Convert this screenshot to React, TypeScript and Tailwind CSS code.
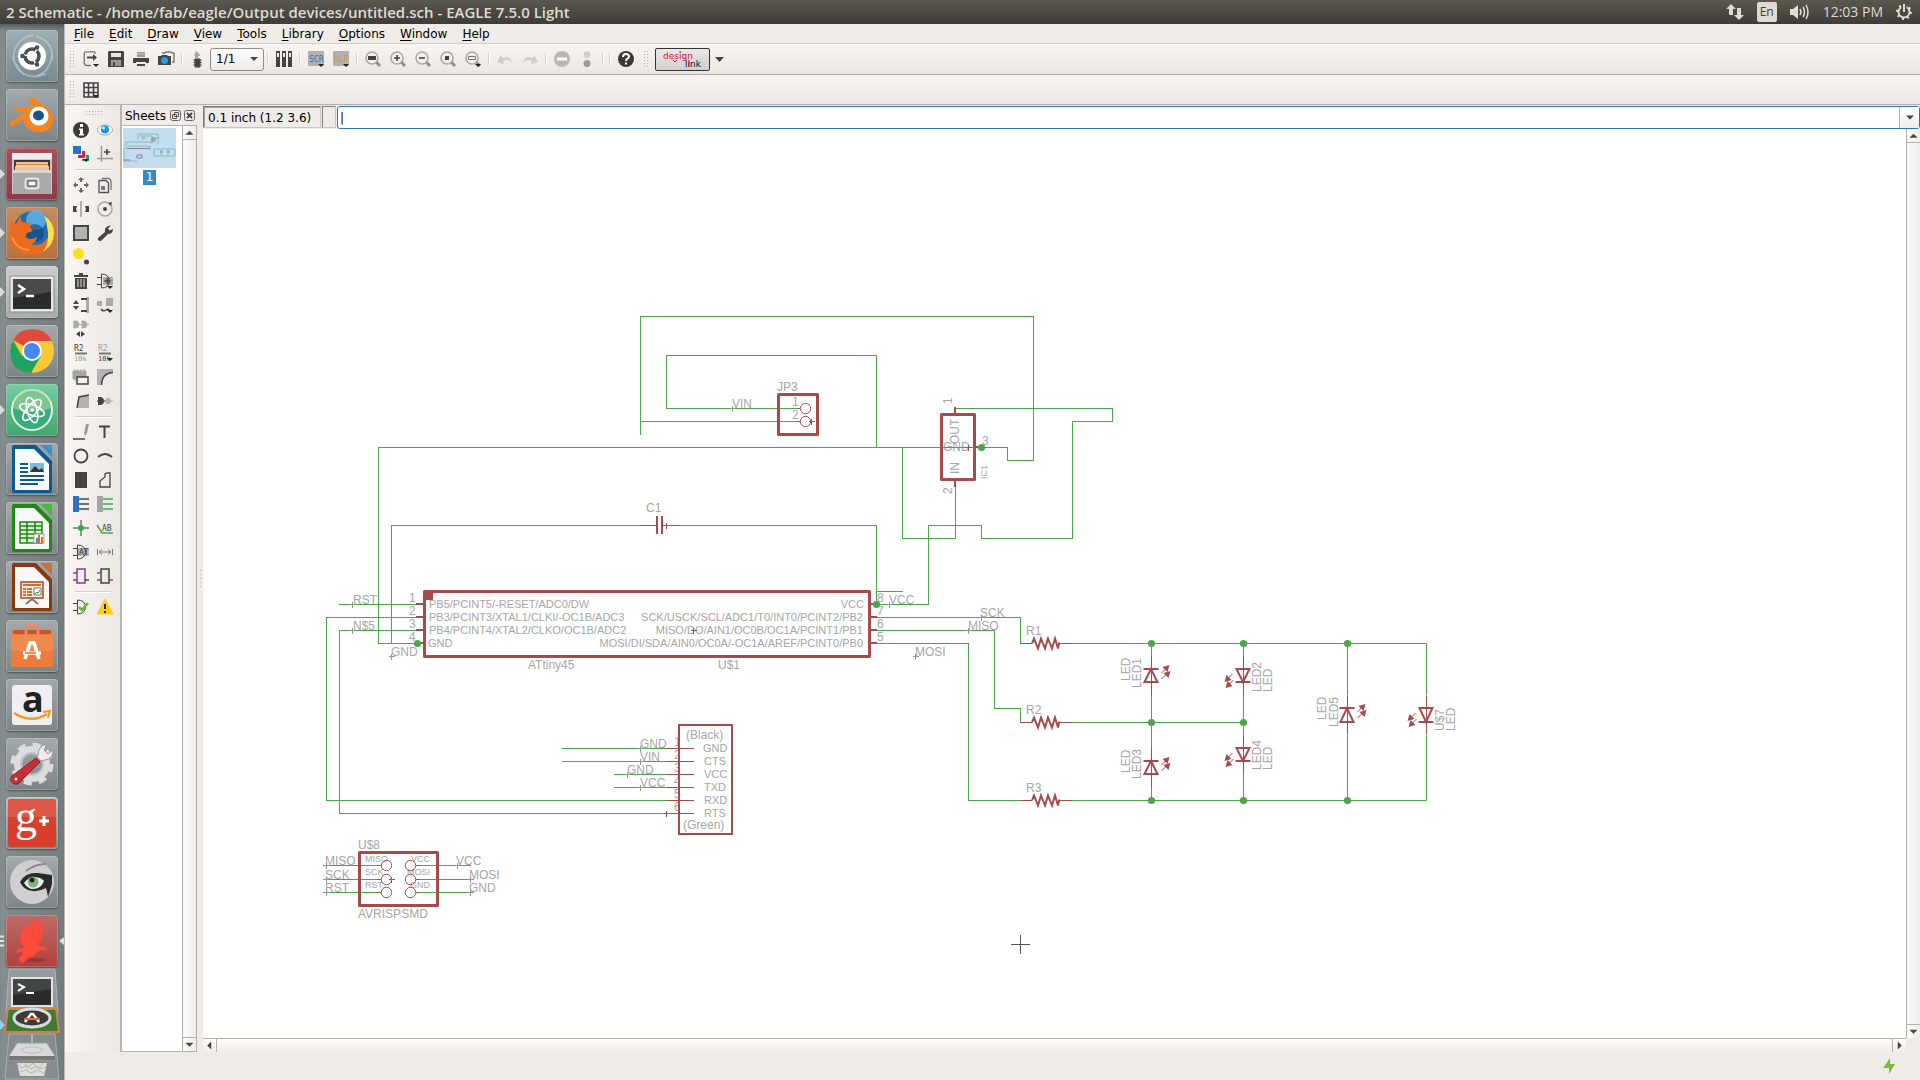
import { ReactNode } from "react";

const WIRE = "#4ba54b";
const PART = "#a54b4b";
const LABEL = "#a5a5a5";
const DARK = "#444444";
const SOFT = "#a0a0a0";

const menus = ["File", "Edit", "Draw", "View", "Tools", "Library", "Options", "Window", "Help"];

function Icon({ children, w = 16, h = 16 }: { children: ReactNode; w?: number; h?: number }) {
  return (
    <svg width={w} height={h} viewBox={`0 0 ${w} ${h}`} fill="none" className="shrink-0 overflow-visible">
      {children}
    </svg>
  );
}

/* ---------- toolbar ---------- */

function ToolButton({ label, children }: { label: string; children: ReactNode }) {
  return (
    <button aria-label={label} className="flex h-6 w-[25px] items-center justify-center">
      <Icon>{children}</Icon>
    </button>
  );
}

function Separator() {
  return (
    <div className="flex w-[7px] justify-center">
      <div className="h-3 w-px bg-[#d2cfcb] shadow-[1px_0_0_#ffffff]" />
    </div>
  );
}

function DropMark() {
  return <path d="M10 13h6l-3 3z" fill="#222" />;
}

function Lens({ children }: { children?: ReactNode }) {
  return (
    <>
      <circle cx="7" cy="7" r="6" stroke="#a8a8a8" strokeWidth="1.6" fill="#f3f1ee" />
      <path d="M11.5 11.5l3.5 3.5" stroke="#8f8f8f" strokeWidth="3" />
      {children}
    </>
  );
}

function Grip() {
  return (
    <svg width="5" height="17" className="shrink-0">
      {[0, 3, 6, 9, 12, 15].map((y) => (
        <path key={y} d={`M0 ${y + 0.5}h1M3 ${y + 0.5}h1`} stroke="#b5b1ac" />
      ))}
    </svg>
  );
}

function MainToolbar() {
  return (
    <div className="flex h-[31px] shrink-0 items-center border-b border-[#b4b0ac] bg-linear-to-b from-[#f8f5f2] to-[#ebe8e3] pl-[5px]">
      <div className="w-2"><Grip /></div>
      <ToolButton label="Open">
        <path d="M12 3V1.5Q12 .8 11 .8H3Q1.2 .8 1.2 2.5v9Q1.2 14.5 4 14.5h4" stroke="#777" strokeWidth="1.3" />
        <path d="M4 5.5h6V3l4 3.5-4 3.5V7.5H4z" fill={DARK} />
        <DropMark />
      </ToolButton>
      <ToolButton label="Save">
        <path d="M1 0h14l1 1v15H0V1z" fill={DARK} />
        <path d="M3 2h10v4H3z" fill="#e8e6e3" />
        <path d="M3 9h10v6H3z" fill="#999" />
        <path d="M5 11h2v4H5z" fill={DARK} />
      </ToolButton>
      <ToolButton label="Print">
        <path d="M4 1h8v5H4z" fill="#999" />
        <path d="M0 7h16v5h-3v-1H3v1H0z" fill={DARK} />
        <path d="M4 13h8v2H4z" fill={DARK} />
        <path d="M4 3h8" stroke="#ccc" />
      </ToolButton>
      <ToolButton label="CAM processor">
        <path d="M4 2h3l1-1h5l1 1h2v9h-2" stroke="#777" strokeWidth="1.4" />
        <path d="M0 5h3l1-1h5l1 1h3v9H0z" fill={DARK} />
        <circle cx="6.5" cy="9.5" r="3.5" fill="#2d9be0" />
      </ToolButton>
      <Separator />
      <ToolButton label="Board">
        <path d="M6 0q4 3 4 5H8v2H5V5H4z" fill="#a5a5a5" />
        <path d="M5 8h5v8H5zM3.5 9h8M3.5 11.5h8M3.5 14h8" fill={DARK} stroke={DARK} />
      </ToolButton>
      <div className="relative flex">
        <select aria-label="Sheet" className="h-[23px] w-[54px] appearance-none rounded-[3px] border border-[#8f8b87] bg-linear-to-b from-white to-[#eceae7] pl-[5px] text-xs leading-none">
          <option>1/1</option>
        </select>
        <svg width="8" height="5" className="pointer-events-none absolute right-[6px] top-[9px]">
          <path d="M0 0h8L4 4z" fill={DARK} />
        </svg>
      </div>
      <Separator />
      <ToolButton label="Library manager">
        {[0, 6, 12].map((x) => (
          <g key={x}>
            <path d={`M${x} 0h4v16H${x}z`} fill={DARK} />
            <path d={`M${x + 1} 2h2v4h-2z`} fill="#eee" />
          </g>
        ))}
      </ToolButton>
      <Separator />
      <ToolButton label="Run script">
        <path d="M0 0h16v15H0z" fill="#b2b2b2" />
        <text x="1" y="11" fontSize="8" fill="#2f77bd" className="font-['DejaVu_Sans_Mono',monospace]">SCR</text>
        <DropMark />
      </ToolButton>
      <ToolButton label="Run ULP">
        <path d="M0 0h16v15H0z" fill="#b2b2b2" />
        <text x="1" y="11" fontSize="8" fill="#e8912b" className="font-['DejaVu_Sans_Mono',monospace]">ULP</text>
        <DropMark />
      </ToolButton>
      <Separator />
      <ToolButton label="Zoom to fit"><Lens><path d="M3 5h8v4H3z" fill={DARK} /></Lens></ToolButton>
      <ToolButton label="Zoom in"><Lens><path d="M7 4v6M4 7h6" stroke={DARK} strokeWidth="1.6" /></Lens></ToolButton>
      <ToolButton label="Zoom out"><Lens><path d="M4 7h6" stroke={DARK} strokeWidth="1.6" /></Lens></ToolButton>
      <ToolButton label="Redraw"><Lens><path d="M5 5h4v4H5z" fill={DARK} /></Lens></ToolButton>
      <ToolButton label="Zoom select">
        <Lens><path d="M3.5 5.5h7v3h-7z" stroke="#777" /></Lens>
        <DropMark />
      </ToolButton>
      <Separator />
      <ToolButton label="Undo"><path d="M15 12Q14 4 5 7L4 4 0 11l7 2-1-3q6-3 9 2z" fill="#cfccc9" /></ToolButton>
      <ToolButton label="Redo"><path d="M1 12Q2 4 11 7l1-3 4 7-7 2 1-3q-6-3-9 2z" fill="#cfccc9" /></ToolButton>
      <Separator />
      <ToolButton label="Stop">
        <circle cx="8" cy="8" r="8" fill="#b9b6b3" />
        <path d="M3 6.5h10v3H3z" fill="#fff" />
      </ToolButton>
      <ToolButton label="Go">
        <circle cx="8" cy="3.5" r="3.3" fill="#cfccc9" />
        <circle cx="8" cy="12.5" r="3.5" fill="#9c9996" />
      </ToolButton>
      <Separator />
      <Separator />
      <ToolButton label="Help">
        <circle cx="8" cy="8" r="8" fill="#3a3a3a" />
        <path d="M5 6q0-3 3-3t3 2.5q0 1.5-1.5 2.2Q8 8.5 8 10" stroke="#fff" strokeWidth="2" />
        <path d="M7 11.5h2v2H7z" fill="#fff" />
      </ToolButton>
      <div className="flex w-[17px] justify-center"><Grip /></div>
      <button aria-label="Design link" className="flex h-[23px] w-[55px] items-center justify-center rounded-[2px] border border-[#333] bg-linear-to-b from-[#e8e8e8] to-[#cfcfcf]">
        <svg width="40" height="19" className="overflow-visible font-['DejaVu_Sans',sans-serif]">
          <text x="0" y="9" fontSize="9" fill="#d3123f">design</text>
          <path d="M16 2h2M10 10l2 2 2-2" stroke="#d3123f" fill="none" />
          <text x="22" y="17" fontSize="9" fill="#111">link</text>
          <path d="M26 11v6" stroke="#d3123f" />
        </svg>
      </button>
      <button aria-label="Design link options" className="flex w-[19px] justify-center">
        <Icon w={9} h={5}><path d="M0 0h9L4.5 5z" fill={DARK} /></Icon>
      </button>
    </div>
  );
}

/* ---------- tool palette ---------- */

const gate = "M0 4.5h4M0 11.5h4M4.5 1v14M4.5 1Q12 1 12.5 8 12 15 4.5 15";

const palette: ([string, ReactNode] | null)[][] = [
  [
    ["Info", <><circle cx="8" cy="8" r="8" fill="#3c3c3c" /><path d="M7 2h3v3H7zM6 6.5h4V12h1v1.5H6V12h1V8H6z" fill="#fff" /></>],
    ["Show", <><ellipse cx="8" cy="8" rx="7.5" ry="5" fill="#fff" stroke="#aaa" /><circle cx="8" cy="7.5" r="4" fill="#1296e0" /><circle cx="6.5" cy="6" r="1.5" fill="#d5efff" /></>],
    ["Display", <><path d="M0 0h8v8H0z" fill="#2c74bf" /><path d="M9 5h3v7H5V9h4z" fill="#d81b5a" /><path d="M13 9h3v6H9v-2h4z" fill="#25a55a" /><DropMark /></>],
    ["Mark", <><path d="M4.5 0v16M0 12.5h16" stroke="#999" strokeWidth="1.5" /><path d="M10 3v6M7 6h6" stroke={DARK} strokeWidth="1.5" /></>]
  ],
  [
    ["Move", <path d="M8 0l3 3H9v2H7V3H5zM8 16l-3-3h2v-2h2v2h2zM0 8l3-3v2h2v2H3v2zM16 8l-3 3V9h-2V7h2V5z" fill="#666" />],
    ["Copy", <><path d="M5 1.5h7l2 2V13" stroke="#777" strokeWidth="1.3" /><path d="M2 3.5h7l2.5 2.5v9.5H2z" stroke="#555" strokeWidth="1.3" /><path d="M4 9h4v4H4z" fill="#777" /></>],
    ["Mirror", <><path d="M8 0v16" stroke="#999" strokeWidth="1.5" /><path d="M0 5h4L3 8l1 3H0zM16 5h-4l1 3-1 3h4z" fill={DARK} /></>],
    ["Rotate", <><circle cx="8" cy="8" r="7" stroke="#aaa" strokeWidth="1.6" /><circle cx="8" cy="8" r="2" fill={DARK} /><path d="M11 2l4-1-1 4z" fill={DARK} /></>],
    ["Group", <path d="M1 1h14v14H1z" fill="#b2b2b2" stroke={DARK} strokeWidth="2" />],
    ["Change", <path d="M1 13l7-6q-1-4 3-6l3-.5-3 3 1.5 2L16 4q0 5-5 5l-7 7Q0 16 1 13z" fill={DARK} />],
    ["Paste", <><circle cx="5.5" cy="4.5" r="5.5" fill="#ffe01f" /><circle cx="13.5" cy="13" r="2.5" fill={DARK} /></>],
    null,
    ["Delete", <><path d="M6 0h4v2h5v2H1V2h5zM2 5h12v11H2z" fill={DARK} /><path d="M5 6v8M8 6v8M11 6v8" stroke="#ddd" /></>],
    ["Add", <><path d="M6 4h10v8H6z" fill="#a8a8a8" /><path d={gate} stroke={DARK} /><path d="M10.5 5v6M7.5 8h6" stroke={DARK} strokeWidth="1.5" /><DropMark /></>],
    ["Pinswap", <><path d="M3 3l3 4H0zM3 13l3-4H0z" fill={DARK} /><path d="M13 0h3v16h-3z" fill="#aaa" /><path d="M8 2h6M8 14h6" stroke={DARK} strokeWidth="2" /></>],
    ["Replace", <><path d="M0 4h5v5H0zM9 1h7v8H9z" fill="#aaa" /><path d="M4 12q2 3 5 1t3 1" stroke={DARK} strokeWidth="1.5" /><DropMark /></>],
    ["Gateswap", <><path d="M1 0h1q4 0 4 3.5T2 7H1zM9 0h1q4 0 4 3.5T10 7H9zM0 1.5h2M0 5.5h2M6 3.5h3M14 3.5h2" fill="#aaa" stroke="#aaa" /><path d="M3 13l4-3v6zM12 13l-4-3v6z" fill={DARK} /></>],
    null,
    ["Name", <><text x="1" y="6" fontSize="8" fill={DARK}>R2</text><path d="M2 8.5h12" stroke="#777" strokeWidth="2" /><text x="1" y="16" fontSize="7" fill={SOFT}>10k</text></>],
    ["Value", <><text x="1" y="6" fontSize="8" fill={SOFT}>R2</text><path d="M2 8.5h12" stroke="#777" strokeWidth="2" /><text x="1" y="16" fontSize="7" fill={DARK}>10k</text><DropMark /></>],
    ["Smash", <><path d="M0 2h13v8H0zM2 0v12M5 0v12M8 0v12M11 0v12" fill="#a5a5a5" stroke="#a5a5a5" /><path d="M4 8h11v7H4z" fill="#f4f2ef" stroke={DARK} strokeWidth="1.5" /></>],
    ["Miter", <><path d="M0 0h16v4Q5 4 5 16H0z" fill="#b2b2b2" /><path d="M16 3.5Q5 4 4.5 16" stroke={DARK} strokeWidth="1.5" /></>],
    ["Split", <><path d="M4 15L6 4l10-2v13z" fill="#b2b2b2" /><path d="M4 15L6 4l10-2" stroke={DARK} strokeWidth="1.5" /></>],
    ["Invoke", <><path d="M0 8h2M6 8h3" stroke={DARK} /><path d="M1 4h3q3 1 3 4t-3 4H1z" fill={DARK} /><path d="M9 5h2q3 0 3 3t-3 3H9zM14 7.5h2v1h-2z" fill="#b2b2b2" /></>]
  ],
  [
    ["Line", <><path d="M0 15h12" stroke={DARK} strokeWidth="1.5" /><path d="M13 0h3l-2 9-2 3-1-3z" fill="#999" /></>],
    ["Text", <path d="M2 2.5h11M7.5 2v12" stroke={DARK} strokeWidth="2" />],
    ["Circle", <circle cx="8" cy="8" r="6.5" stroke={DARK} strokeWidth="1.8" />],
    ["Arc", <path d="M1 9q7-6 14 0" stroke={DARK} strokeWidth="2" />],
    ["Rectangle", <path d="M2 0h12v16H2z" fill={DARK} />],
    ["Polygon", <path d="M3 15V9l5-4V2l2-1h3v14z" stroke={DARK} strokeWidth="1.3" />],
    ["Bus", <><path d="M0 0h6v16H0z" fill="#2c74bf" /><path d="M6 3h10M6 8h10M6 13h10" stroke={DARK} strokeWidth="1.5" /></>],
    ["Net", <><path d="M0 0h6v16H0z" fill="#a5a5a5" /><path d="M6 3h10M6 8h10M6 13h10" stroke={WIRE} strokeWidth="1.5" /></>],
    ["Junction", <><path d="M8 0v16M0 8h16" stroke="#777" strokeWidth="1.5" /><circle cx="8" cy="8" r="3" fill="#3aa83a" /></>],
    ["Label", <><path d="M0 5l5 8h11" stroke={WIRE} strokeWidth="1.5" /><text x="5" y="11" fontSize="8" fill={DARK}>AB</text></>],
    ["Attribute", <><path d="M5 4h11v8H5z" fill="#b2b2b2" /><path d={gate} stroke={DARK} /><text x="6" y="11" fontSize="8" fill={DARK}>AT</text></>],
    ["Dimension", <><path d="M.5 5v6M15.5 5v6M2 8h12" stroke="#777" /><path d="M5 5.5L2 8l3 2.5M11 5.5L14 8l-3 2.5" stroke="#777" /></>],
    ["Module", <><path d="M4 1h8v14H4z" stroke="#8e3a94" strokeWidth="1.5" /><path d="M0 5h4M0 12h4" stroke="#8e3a94" strokeWidth="1.5" /><path d="M12 12h4" stroke={DARK} strokeWidth="1.5" /></>],
    ["Port", <><path d="M4 1h8v14H4z" stroke={DARK} strokeWidth="1.5" /><path d="M0 5h4M0 12h4M12 12h4" stroke="#8e3a94" strokeWidth="1.5" /></>]
  ],
  [
    ["ERC", <><path d={gate} stroke={DARK} /><path d="M6 8l3 3 6-7" stroke="#6db52c" strokeWidth="2.5" /></>],
    ["Errors", <><path d="M8 0l8 15H0z" fill="#ffcf0a" stroke="#ffcf0a" strokeLinejoin="round" /><path d="M8 5v5M8 12v2" stroke="#222" strokeWidth="2" /></>]
  ]
];

function Palette() {
  return (
    <aside className="flex w-[57px] shrink-0 flex-col border-r-2 border-[#b9b5b2] bg-linear-to-r from-[#f8f5f2] to-[#ebe8e4] px-1">
      <svg width="16" height="13" className="ml-[17px] shrink-0">
        {[0, 3, 6, 9, 12, 15].map((x) => (
          <path key={x} d={`M${x} 6.5h1M${x} 9.5h1`} stroke="#b5b1ac" />
        ))}
      </svg>
      {palette.map((group, i) => (
        <div key={i}>
          {i > 0 && (
            <div className="flex h-[7px] items-center">
              <div className="ml-[6px] h-px w-9 bg-[#d2cfcb] shadow-[0_1px_0_#ffffff]" />
            </div>
          )}
          <div className="grid w-12 grid-cols-2 font-['DejaVu_Sans_Mono',monospace]">
            {group.map((tool, j) =>
              tool ? (
                <button key={j} aria-label={tool[0]} className="flex size-6 items-center justify-center">
                  <Icon>{tool[1]}</Icon>
                </button>
              ) : (
                <span key={j} />
              )
            )}
          </div>
        </div>
      ))}
    </aside>
  );
}

/* ---------- launcher ---------- */

const grey = "from-[#a4a9ab] to-[#7e8587]";

const launchers: { name: string; tile: string; running?: boolean; active?: boolean; art: ReactNode }[] = [
  {
    name: "Dash", tile: "from-[#9fb0b4] to-[#758a91]", art: (
      <>
        <path d="M7 30Q8 8 28 5M18 45Q0 30 13 12M40 44Q18 52 10 34M46 20Q46 42 30 46M30 6Q48 12 46 30" stroke="#c3ced0" strokeWidth="1.5" opacity=".7" />
        <circle cx="26" cy="26" r="14" fill="#fff" />
        <circle cx="26" cy="26" r="7" stroke="#4a4f50" strokeWidth="3.5" strokeDasharray="13 1.7" strokeDashoffset="6" />
        <circle cx="16.5" cy="26" r="2.3" fill="#4a4f50" /><circle cx="31" cy="17.5" r="2.3" fill="#4a4f50" /><circle cx="31" cy="34.5" r="2.3" fill="#4a4f50" />
      </>
    )
  },
  {
    name: "Blender", tile: grey, art: (
      <>
        <path d="M4 33L20 22H9q-2-3 1-4h18l-5-6q0-4 4-4l15 12q6 5 5 13-2 10-14 10-13 0-16-13L8 37q-4 1-4-4z" fill="#f5861f" />
        <circle cx="33" cy="27" r="9.5" fill="#fff" />
        <ellipse cx="32.5" cy="26.5" rx="5.5" ry="5" fill="#14568c" />
      </>
    )
  },
  {
    name: "Files", tile: "from-[#a8505c] to-[#8e3a49]", running: true, art: (
      <>
        <path d="M6 5h40v41H6z" fill="#c9c9c9" /><path d="M6 5h40v6H6z" fill="#ededed" /><path d="M8 12h36v12H8z" fill="#3f3b38" />
        <path d="M10 14h32v10H10z" fill="#e98a3a" /><path d="M9 18h34v6H9z" fill="#f7c08a" /><path d="M10 15h32M10 18h32" stroke="#fff" />
        <path d="M7 22h38v24H7z" fill="#a9a9a9" /><path d="M7 22h38v3H7z" fill="#d8d8d8" />
        <rect x="19.5" y="30.5" width="13" height="10" rx="2" stroke="#e5e5e5" strokeWidth="2" /><path d="M22 33h8v5h-8z" fill="#fff" stroke="#444" />
      </>
    )
  },
  {
    name: "Firefox", tile: "from-[#c88b5e] to-[#b4713f]", running: true, art: (
      <>
        <circle cx="27" cy="24" r="20" fill="#1f6fb2" /><circle cx="30" cy="13" r="10" fill="#63b8e8" opacity=".8" />
        <circle cx="29" cy="26" r="9" fill="#123f7c" opacity=".6" />
        <path d="M6 14l4 3 4-8 2 6 9 1-1 4 3 4-6 2-2 4q5 4 12 0-1 6-6 7 8 3 14-3 6-6 7-14 4 11-2 19-8 9-19 9Q6 47 4 30q-1-9 2-16z" fill="#ea6a1e" />
        <path d="M38 8q10 7 10 18 0 12-11 19 6-9 5-20-1-9-4-17z" fill="#ffdf45" />
        <path d="M6 30q4 12 17 13" stroke="#f79a3a" strokeWidth="2" />
      </>
    )
  },
  {
    name: "Terminal", tile: "from-[#cccccc] to-[#a9a9a9]", running: true, art: (
      <>
        <path d="M4 10h44v36H4z" fill="#e6e6e6" stroke="#8f8f8f" /><path d="M7 13h38v30H7z" fill="#2b2b2b" /><path d="M7 13h38v13L7 32z" fill="#4a4a4a" />
        <path d="M12 19l6 4-6 4" stroke="#fff" strokeWidth="2.5" /><path d="M20 30h8" stroke="#fff" strokeWidth="2.5" />
      </>
    )
  },
  {
    name: "Chrome", tile: grey, art: (
      <>
        <circle cx="26" cy="26" r="22" fill="#fcc934" /><path d="M26 26L7 15Q13 4 26 4q14 0 20 12H26z" fill="#dd4b3e" />
        <path d="M26 26v22Q4 47 4 26q0-6 3-11l9 16z" fill="#1da462" /><path d="M25 48l10-17-9-5-9 5z" fill="#1da462" />
        <circle cx="26" cy="26" r="10" fill="#fff" /><circle cx="26" cy="26" r="8" fill="#4688f1" />
      </>
    )
  },
  {
    name: "Atom", tile: "from-[#74cda0] to-[#41a66e]", running: true, art: (
      <>
        <circle cx="26" cy="26" r="20" fill="#3aab7c" stroke="#e5f3e9" strokeWidth="2" /><path d="M7 24a19 19 0 0 1 38 0q-19 8-38 0z" fill="#a8d79c" opacity=".6" />
        <g stroke="#fff" strokeWidth="1.6"><ellipse cx="26" cy="26" rx="13" ry="5" transform="rotate(20 26 26)" /><ellipse cx="26" cy="26" rx="13" ry="5" transform="rotate(75 26 26)" /><ellipse cx="26" cy="26" rx="13" ry="5" transform="rotate(130 26 26)" /></g>
        <circle cx="26" cy="26" r="1.8" fill="#fff" />
      </>
    )
  },
  {
    name: "Writer", tile: grey, art: (
      <>
        <path d="M8 2h22l16 16v30q0 2-2 2H8q-2 0-2-2V4q0-2 2-2z" fill="#0e5a8c" /><path d="M34 2h12v12z" fill="#3f93c4" /><path d="M9 6h19l15 15v26H9z" fill="#f8f8f8" />
        <path d="M14 21h8M14 25h8M14 29h8M14 33h24M14 37h24M14 41h18" stroke="#0e5a8c" strokeWidth="2" />
        <path d="M24 20h14v9H24z" fill="#7bbce0" /><path d="M24 29l5-6 4 4 3-2 2 4z" fill="#333" />
      </>
    )
  },
  {
    name: "Calc", tile: grey, art: (
      <>
        <path d="M8 2h22l16 16v30q0 2-2 2H8q-2 0-2-2V4q0-2 2-2z" fill="#1c8a12" /><path d="M34 2h12v12z" fill="#4db83d" /><path d="M9 6h19l15 15v26H9z" fill="#f8f8f8" />
        <path d="M14 20h22v21H14z" fill="#dff2da" stroke="#1c8a12" strokeWidth="1.5" /><path d="M14 24h22M14 28h22M14 32h22M14 36h22M21 20v21M29 20v21" stroke="#1c8a12" strokeWidth="1.5" />
        <path d="M28 32h10v9H28z" fill="#fff" stroke="#999" /><path d="M30 36h2v5h-2z" fill="#3a8ecb" /><path d="M32 33h2v8h-2zM35 35h2v6h-2z" fill="#e2691c" />
      </>
    )
  },
  {
    name: "Impress", tile: grey, art: (
      <>
        <path d="M8 2h22l16 16v30q0 2-2 2H8q-2 0-2-2V4q0-2 2-2z" fill="#8a3812" /><path d="M34 2h12v12z" fill="#c9713f" /><path d="M9 6h19l15 15v26H9z" fill="#f8f8f8" />
        <path d="M15 21h22v16H15z" fill="#fde9dc" stroke="#b0470f" strokeWidth="1.5" /><path d="M17 24h18M17 28h3M17 31h3M17 34h3M21 28h5M21 31h5M21 34h5" stroke="#b0470f" strokeWidth="1.5" />
        <path d="M28 27h7v7h-7z" fill="#fff" stroke="#777" /><path d="M29 33l2-2 1 1 2-3" stroke="#2a9a2a" /><path d="M26 38l-6 5M26 38l6 5" stroke="#777" strokeWidth="2" />
      </>
    )
  },
  {
    name: "Software Centre", tile: grey, art: (
      <>
        <path d="M7 10h38l2 5v32H5V15z" fill="#ee7a3b" /><path d="M5 15h42v16H5z" fill="#ef8a4e" /><path d="M7 10h38v4H7z" fill="#c4552a" />
        <path d="M20 18V9q1-4 6-4t6 4v9" stroke="#f08868" strokeWidth="3" />
        <path d="M19 39l5-16h4l5 16M17 33h18" stroke="#fff" strokeWidth="3.5" /><path d="M19 33h11" stroke="#ef6a1c" strokeWidth="1.5" />
      </>
    )
  },
  {
    name: "Amazon", tile: grey, art: (
      <>
        <rect x="6" y="6" width="40" height="40" rx="3" fill="#efefef" />
        <text x="16" y="33" fontSize="36" fontWeight="bold" fill="#222" className="font-['Open_Sans',sans-serif]">a</text>
        <path d="M8 34q17 11 33 1" stroke="#f79a1c" strokeWidth="2.5" /><path d="M37 33l7-1-2 7" stroke="#f79a1c" strokeWidth="2" />
      </>
    )
  },
  {
    name: "System Settings", tile: grey, art: (
      <>
        <circle cx="26" cy="26" r="14" stroke="#dcdcdc" strokeWidth="8" /><circle cx="26" cy="26" r="19" stroke="#dcdcdc" strokeWidth="5" strokeDasharray="8 6.92" />
        <circle cx="26" cy="26" r="11" stroke="#bcbcbc" strokeWidth="1.5" />
        <path d="M32 17q0-9 9-11l-3 6 4 4 5-4q0 9-8 10l-4 1-4-4z" fill="#ececec" stroke="#999" />
        <path d="M30 20l4 4L14 44q-3 4-7 1t-1-7z" fill="#c52f36" stroke="#8c1d25" /><circle cx="10" cy="41" r="1.5" fill="#eee" />
      </>
    )
  },
  {
    name: "Google Plus", tile: "from-[#b9bebf] to-[#7e8587]", art: (
      <>
        <rect x="2" y="2" width="48" height="48" rx="3" fill="#d6402d" /><path d="M2 5q0-3 3-3h42q3 0 3 3v15H2z" fill="#e2695a" opacity=".6" />
        <text x="9" y="34" fontSize="44" fill="#fff" className="font-['Liberation_Serif',serif]">g</text>
        <path d="M38 19v10M33 24h10" stroke="#fff" strokeWidth="3" />
      </>
    )
  },
  {
    name: "Eye viewer", tile: grey, art: (
      <>
        <circle cx="26" cy="26" r="22" fill="#cfcfcf" /><path d="M14 26q5-10 18-9l14 2v9q-2 8-4 13-1-6-2-9-9 5-18 2-6-3-8-8z" fill="#2b2b2b" />
        <path d="M18 27q5-7 12-6 6 1 8 4-3 8-11 8-5 0-9-6z" fill="#efefef" /><circle cx="27" cy="26" r="5.5" fill="#7fb878" /><circle cx="26" cy="24" r="2.5" fill="#222" /><path d="M20 15q9-7 20-7" stroke="#8c8c8c" strokeWidth="2" />
      </>
    )
  },
  {
    name: "EAGLE", tile: "from-[#bf6a68] to-[#b0413f]", running: true, active: true, art: (
      <>
        <ellipse cx="29" cy="45" rx="12" ry="2" fill="#7a2c2c" opacity=".5" />
        <path d="M28 4l1 5 4-5-1 6 6-5-4 7 5-3-4 6 4-1-5 6 4 0-5 5 3 0-4 3 2 3 4 1 4 4-7-1-4 2-3 4-5 2-3 3-2 0-1 2-3-1 1-2-3 0 2-3 3-2-1-3q-4-1-5 2-2-3 1-5l6-2q-4-4-4-8l1-5 2-5q6-3 9-8z" fill="#ff4a3c" />
      </>
    )
  }
];

function Launcher() {
  return (
    <nav className="flex w-[65px] shrink-0 flex-col overflow-hidden border-r border-[#b9bcbc] bg-linear-to-r from-[#868d8f] to-[#757c7e] pt-[6px] shadow-[inset_0_6px_5px_-3px_#555b5c]">
      <div className="flex flex-col gap-[7px]">
        {launchers.map((item) => (
          <div key={item.name} className="flex h-[52px] items-center">
            <div className="w-[6px]">
              {item.active ? (
                <Icon w={5} h={12}><path d="M0 1.5h4M0 6h4M0 10.5h4" stroke="#e3e3e3" strokeWidth="2" /></Icon>
              ) : item.running ? (
                <Icon w={5} h={10}><path d="M0 0l5 5-5 5z" fill="#dcdcdc" /></Icon>
              ) : null}
            </div>
            <button aria-label={item.name} className={`size-[52px] rounded-[4px] bg-linear-to-b shadow-[inset_0_0_0_1px_rgba(255,255,255,0.2),0_1px_2px_rgba(0,0,0,0.4)] ${item.tile}`}>
              <Icon w={52} h={52}>{item.art}</Icon>
            </button>
            {item.active && <Icon w={6} h={10}><path d="M6 1v8L1 5z" fill="#dcdcdc" /></Icon>}
          </div>
        ))}
      </div>
      <button aria-label="Folded applications" className="mt-px">
        <Icon w={64} h={112}>
          <path d="M9 1h46l3 44H6z" fill="#959b9d" stroke="#afb4b5" />
          <path d="M11 9h42v30H11z" fill="#e3e3e3" /><path d="M13 11h38v26H13z" fill="#2b2b2b" /><path d="M13 11h38v10l-38 6z" fill="#454545" />
          <path d="M18 16l6 3-6 4M26 25h8" stroke="#fff" strokeWidth="2" />
          <path d="M8 41h48l3 23H5z" fill="#3f7b36" stroke="#c9814d" strokeWidth="2" /><path d="M0 52l5 5-5 5z" fill="#8fd0ee" />
          <ellipse cx="32" cy="50" rx="18" ry="9" fill="#3b3b3b" stroke="#dcdcdc" strokeWidth="3" /><path d="M25 54l6-8h2l6 8" stroke="#fff" strokeWidth="2.5" /><path d="M24 51h16" stroke="#ef6a1c" strokeWidth="2" />
          <path d="M9 66h46l4 45H5z" fill="#858c8e" stroke="#a9aeaf" /><path d="M32 66v14" stroke="#ddd" />
          <path d="M17 75h30l8 13v4H9v-4z" fill="#d9d9d9" stroke="#9d9d9d" /><path d="M9 88h46v4H9z" fill="#777" /><ellipse cx="32" cy="82" rx="11" ry="3" stroke="#bdbdbd" />
          <path d="M17 95h30l-3 13H20z" fill="#deded9" /><path d="M18 97l4 3 5-3 4 4 6-3 4 3 5-2M20 104l6-2 5 3 6-3 7 3M24 94l3 6 6-5 6 6 4-6" stroke="#b5b6b0" />
        </Icon>
      </button>
    </nav>
  );
}

/* ---------- schematic ---------- */

const wires = [
  "M339 604.5H417", "M417 617.5H326.5V800.5H667", "M417 630.5H339.5V813.5H667",
  "M417 643.5H378.5V447.5H1007.5V460.5H1033.5V316.5H640.5V435", "M640 421.5H798",
  "M798 408.5H666.5V355.5H876.5V447.5", "M902.5 447.5V538.5H955.5V486",
  "M955 408.5H1112.5V421.5H1072.5V538.5H981.5V525.5H928.5V604.5H876",
  "M391.5 643.5V525.5H640M679 525.5H876.5V604M876 591.5H903",
  "M876 617.5H1020.5V643.5", "M876 630.5H994.5V708.5H1020.5V722.5", "M876 643.5H968.5V800.5H1020",
  "M1072 643.5H1426.5V695M1426.5 735V800.5H1072", "M1072 722.5H1243.5",
  "M1151.5 643V657M1151.5 695V749M1151.5 787V800", "M1243.5 643V657M1243.5 695V735M1243.5 774V800",
  "M1347.5 643V695M1347.5 735V800",
  "M562 748.5H667M562 761.5H667M614 774.5H667M614 787.5H667",
  "M323 865.5H377M323 879.5H377M323 892.5H377M417 865.5H471M417 879.5H471M417 892.5H471"
];

const junctions = [
  [417.5, 643.5], [876.5, 604.5], [981.5, 447.5], [1151.5, 643.5], [1243.5, 643.5], [1347.5, 643.5],
  [1151.5, 722.5], [1243.5, 722.5], [1151.5, 800.5], [1243.5, 800.5], [1347.5, 800.5]
];

const labelCrosses = [
  [352.5, 604.5], [352.5, 630.5], [391.5, 656.5], [889.5, 604.5], [981.5, 617.5], [968.5, 630.5], [915.5, 656.5],
  [640.5, 748.5], [640.5, 761.5], [627.5, 774.5], [640.5, 787.5], [732.5, 408.5],
  [326.5, 865.5], [326.5, 879.5], [326.5, 892.5], [457.5, 865.5], [470.5, 879.5], [470.5, 892.5]
];

const partCrosses = [[693.5, 630.5], [666.5, 813.5], [811.5, 421.5], [968.5, 447.5], [666.5, 525.5], [391.5, 879.5]];

type Label = [string, number, number];

const labels: Label[] = [
  ["RST", 353, 604], ["N$5", 353, 630], ["GND", 391, 656], ["1", 409, 602], ["2", 409, 615], ["3", 409, 628], ["4", 409, 641],
  ["ATtiny45", 528, 669], ["U$1", 718, 669], ["8", 877, 602], ["7", 877, 615], ["6", 877, 628], ["5", 877, 641],
  ["VCC", 889, 604], ["SCK", 980, 617], ["MISO", 968, 630], ["MOSI", 915, 656], ["C1", 646, 512], ["JP3", 777, 391],
  ["VIN", 732, 408], ["1", 792, 406], ["2", 792, 419], ["GND", 943, 451], ["3", 982, 445],
  ["(Black)", 686, 739], ["(Green)", 683, 829], ["GND", 640, 748], ["VIN", 640, 761], ["GND", 627, 774], ["VCC", 640, 787],
  ["1", 674, 746], ["2", 674, 759], ["3", 674, 772], ["4", 674, 785], ["5", 674, 798], ["6", 674, 811],
  ["R1", 1026, 635], ["R2", 1026, 714], ["R3", 1026, 792], ["U$8", 358, 849], ["AVRISPSMD", 358, 918],
  ["MISO", 325, 865], ["SCK", 325, 879], ["RST", 325, 892], ["VCC", 456, 865], ["MOSI", 469, 879], ["GND", 469, 892]
];

const pinNames: Label[] = [
  ["PB5/PCINT5/-RESET/ADC0/DW", 429, 608], ["PB3/PCINT3/XTAL1/CLKI/-OC1B/ADC3", 429, 621],
  ["PB4/PCINT4/XTAL2/CLKO/OC1B/ADC2", 429, 634], ["GND", 428, 647],
  ["GND", 703, 752], ["CTS", 704, 765], ["VCC", 704, 778], ["TXD", 704, 791], ["RXD", 704, 804], ["RTS", 704, 817]
];

const rightPinNames: Label[] = [
  ["VCC", 864, 608], ["SCK/USCK/SCL/ADC1/T0/INT0/PCINT2/PB2", 863, 621],
  ["MISO/DO/AIN1/OC0B/OC1A/PCINT1/PB1", 863, 634], ["MOSI/DI/SDA/AIN0/OC0A/-OC1A/AREF/PCINT0/PB0", 863, 647]
];

const turned: Label[] = [
  ["LED", 1130, 681], ["LED1", 1141, 688], ["LED2", 1261, 692], ["LED", 1272, 692], ["LED", 1130, 773], ["LED3", 1141, 779],
  ["LED4", 1261, 770], ["LED", 1272, 770], ["LED", 1326, 720], ["LED5", 1338, 727], ["U$7", 1444, 731], ["LED", 1455, 731],
  ["1", 952, 404], ["2", 952, 494], ["OUT", 959, 444], ["IN", 959, 474]
];

function Cross({ x, y, color }: { x: number; y: number; color: string }) {
  return <path d={`M${x - 3} ${y}h6M${x} ${y - 3}v6`} stroke={color} shapeRendering="crispEdges" />;
}

function Resistor({ y }: { y: number }) {
  return (
    <g stroke={PART}>
      <path d={`M1020 ${y}h12M1060 ${y}h12`} />
      <path d={`M1032 ${y}l2-5 4 10 3-10 4 10 3-10 4 10 3-10 3 10 1-5h1`} strokeWidth="2" />
    </g>
  );
}

function Led({ x, y, h = 13, down }: { x: number; y: number; h?: number; down?: boolean }) {
  const lead = (39 - h) / 2;
  return (
    <g stroke={PART}>
      <path d={`M${x} ${y - lead}v39`} />
      {down ? (
        <>
          <path d={`M${x - 7} ${y}h13l-6.5 ${h}zM${x - 8} ${y + h}h15`} strokeWidth="2" />
          <path d={`M${x - 11} ${y + 5}l-5 5M${x - 10} ${y + 11}l-5 5`} />
          <path d={`M${x - 19} ${y + 13}l2-7 5 5zM${x - 18} ${y + 19}l2-7 5 5z`} fill={PART} stroke="none" />
        </>
      ) : (
        <>
          <path d={`M${x - 7} ${y + h}h13l-6.5-${h}zM${x - 8} ${y}h15`} strokeWidth="2" />
          <path d={`M${x + 10} ${y + 4}l5-5M${x + 10} ${y + 10}l5-5`} />
          <path d={`M${x + 18} ${y - 4}l-2 7-5-5zM${x + 19} ${y + 2}l-2 7-5-5z`} fill={PART} stroke="none" />
        </>
      )}
    </g>
  );
}

function Schematic() {
  return (
    <svg className="absolute inset-0 h-full w-full font-['Liberation_Sans',sans-serif]" fill="none" fontSize="12">
      <g transform="translate(-203 -129)">
        <g fill={LABEL}>
          {labels.map(([text, x, y]) => <text key={`${x}-${y}`} x={x} y={y}>{text}</text>)}
          {turned.map(([text, x, y]) => <text key={`${x}-${y}`} transform={`translate(${x} ${y}) rotate(-90)`}>{text}</text>)}
          <g fontSize="11">
            {pinNames.map(([text, x, y]) => <text key={`${x}-${y}`} x={x} y={y}>{text}</text>)}
            {rightPinNames.map(([text, x, y]) => <text key={`${x}-${y}`} x={x} y={y} textAnchor="end">{text}</text>)}
          </g>
          <g fontSize="9">
            <text x="365" y="862">MISO</text>
            <text x="365" y="875">SCK</text>
            <text x="365" y="888">RST</text>
            <text x="430" y="862" textAnchor="end">VCC</text>
            <text x="430" y="875" textAnchor="end">MOSI</text>
            <text x="430" y="888" textAnchor="end">GND</text>
            <text transform="translate(987 479) rotate(-90)">IC1</text>
          </g>
        </g>
        <g stroke={WIRE} shapeRendering="crispEdges">
          {wires.map((d) => <path key={d} d={d} />)}
        </g>
        <g stroke={PART}>
          <g strokeWidth="3" strokeLinejoin="round">
            <rect x="424.5" y="591.5" width="445" height="65" />
            <rect x="778.5" y="394.5" width="39" height="40" />
            <rect x="941.5" y="414.5" width="33" height="65" />
            <rect x="359.5" y="852.5" width="78" height="53" />
          </g>
          <path d="M424 591h9v9h-9z" fill={PART} stroke="none" />
          <rect x="679" y="725" width="53" height="109" strokeWidth="2" />
          <path d="M416 604h8M416 617h8M416 630h8M418 643h6M870 604h6M870 617h7M870 630h7M870 643h7M976 447h5M955 407v7M955 480v7M657 516v18M662 516v18" strokeWidth="2" />
          <path d="M667 748.5h27M667 761.5h27M667 774.5h27M667 787.5h27M667 800.5h27M667 813.5h27M640 525.5h16M663 525.5h16M797 408.5h3M797 421.5h3" />
          <path d="M377 865.5h4M377 879.5h4M377 892.5h4M416 865.5h4M416 879.5h4M416 892.5h4" />
          <circle cx="805.5" cy="408.5" r="5.2" /><circle cx="805.5" cy="421.5" r="5.2" />
          {[865.5, 879.5, 892.5].map((y) => (
            <g key={y}>
              <circle cx="386.5" cy={y} r="5.2" />
              <circle cx="410.5" cy={y} r="5.2" />
            </g>
          ))}
        </g>
        <Resistor y={643.5} />
        <Resistor y={722.5} />
        <Resistor y={800.5} />
        <Led x={1151.5} y={669} />
        <Led x={1151.5} y={761} />
        <Led x={1243.5} y={669} down />
        <Led x={1243.5} y={748} down />
        <Led x={1347.5} y={708} h={14} />
        <Led x={1426.5} y={708} h={14} down />
        {labelCrosses.map(([x, y]) => <Cross key={`${x}-${y}`} x={x} y={y} color="#8c9c8c" />)}
        {partCrosses.map(([x, y]) => <Cross key={`${x}-${y}`} x={x} y={y} color={PART} />)}
        {junctions.map(([x, y]) => <circle key={`${x}-${y}`} cx={x} cy={y} r="3.6" fill={WIRE} />)}
        <path d="M1011 944.5h19M1020.5 935v19" stroke="#555" shapeRendering="crispEdges" />
      </g>
    </svg>
  );
}

/* ---------- panels ---------- */

const arrows = {
  up: "M3 8.5h7L6.5 5z",
  down: "M3 5h7L6.5 8.5z",
  left: "M8 3v7L4.5 6.5z",
  right: "M5 3v7l3.5-3.5z"
};

function Arrow({ to }: { to: keyof typeof arrows }) {
  return (
    <button aria-label={`Scroll ${to}`} className="flex size-[13px] shrink-0 items-center justify-center">
      <Icon w={13} h={13}><path d={arrows[to]} fill={DARK} stroke={DARK} strokeWidth=".5" /></Icon>
    </button>
  );
}

function VerticalScroll() {
  return (
    <div className="flex w-[14px] shrink-0 flex-col border-l border-[#b4b0ac] bg-linear-to-r from-[#fcfcfb] to-[#efedea]">
      <Arrow to="up" />
      <div className="flex-1 border-y border-[#b4b0ac]" />
      <Arrow to="down" />
    </div>
  );
}

function Sheets() {
  return (
    <section className="flex w-[75px] shrink-0 flex-col">
      <div className="flex h-5 shrink-0 items-center gap-[3px] pl-[3px]">
        <h2 className="flex-1 pt-px text-xs leading-none">Sheets</h2>
        <button aria-label="Detach">
          <Icon w={11} h={11}><rect x=".5" y=".5" width="10" height="10" rx="2" stroke="#666" /><path d="M4.5 2.5h4v4h-4zM2.5 4.5h4v4h-4z" stroke="#555" /></Icon>
        </button>
        <button aria-label="Close" className="mr-[2px]">
          <Icon w={11} h={11}><rect x=".5" y=".5" width="10" height="10" rx="2" stroke="#666" /><path d="M3 3l5 5M8 3L3 8" stroke="#444" strokeWidth="1.8" /></Icon>
        </button>
      </div>
      <div className="flex flex-1 border border-l-0 border-[#b4b0ac] bg-white">
        <div className="flex flex-1 flex-col items-center px-px pr-[6px] pt-[2px]">
          <svg width="53" height="40" className="shrink-0 bg-[#c3dcef]" fill="none" stroke="#6fb5a0">
            <path d="M15 6h20v10M15 6v5M17 8h12v8M3 14h25M3 14v7M5 18h22v4M27 15l5-5h5M1 20v14M1 33h13M31 21h21M31 21v7h21M38 21v7M45 21v7M52 21v7" strokeWidth=".7" />
            <path d="M4 20.5h23M14 27h5v3h-5zM1 32h6M19 10h3M29 10h3v3h-3zM37 24h3M44 24h3" stroke="#8d8296" />
          </svg>
          <span className="mt-[2px] bg-[#308cc6] px-[3px] text-xs leading-[15px] text-white">1</span>
        </div>
        <VerticalScroll />
      </div>
    </section>
  );
}

function CommandRow() {
  return (
    <div className="flex h-6 shrink-0 items-stretch pt-px">
      <output className="flex h-[22px] w-[118px] items-center border border-b-[#c9c5c1] border-l-[#7f7b77] border-r-[#c9c5c1] border-t-[#7f7b77] pl-1 pt-[2px] text-xs leading-none shadow-[inset_1px_1px_0_#a5a19d]">
        0.1 inch (1.2 3.6)
      </output>
      <span className="ml-px mr-px h-[22px] w-[14px] border border-b-[#c9c5c1] border-l-[#7f7b77] border-r-[#c9c5c1] border-t-[#7f7b77]" />
      <div className="flex h-[23px] flex-1 rounded-[3px] border border-[#2a76a6] bg-white">
        <input aria-label="Command" defaultValue="|" className="min-w-0 flex-1 bg-transparent pl-[2px] text-xs outline-none" />
        <button aria-label="Command history" className="flex w-5 items-center justify-center border-l border-[#b4b0ac] bg-linear-to-b from-white to-[#efedea]">
          <Icon w={8} h={5}><path d="M0 .5h8L4 4.5z" fill={DARK} /></Icon>
        </button>
      </div>
    </div>
  );
}

function TopPanel() {
  return (
    <header className="flex h-6 shrink-0 items-center justify-between bg-linear-to-b from-[#5b584e] to-[#3d3c38] pl-[6px] pr-2 text-[#dfdbd2] font-['Open_Sans','Noto_Sans',sans-serif]">
      <h1 className="text-[15px] font-semibold leading-none">2 Schematic - /home/fab/eagle/Output devices/untitled.sch - EAGLE 7.5.0 Light</h1>
      <div className="flex items-center gap-[13px]">
        <Icon w={18} h={16}><path d="M5 0l5 5H7v6H3V5H0zM13 16l-5-5h3V4h4v7h3z" fill="#dfdbd2" /></Icon>
        <span className="flex h-5 w-5 items-center justify-center rounded-[2px] bg-[#dfdbd2] text-xs leading-none text-[#3d3c38]">En</span>
        <Icon w={20} h={18}>
          <path d="M0 6h3l5-4v14l-5-4H0z" fill="#dfdbd2" />
          <path d="M10 6q2 3 0 6M13 4q3 5 0 10M16 2q4 7 0 14" stroke="#dfdbd2" strokeWidth="1.5" />
        </Icon>
        <time className="text-sm leading-none">12:03 PM</time>
        <Icon>
          <circle cx="8" cy="8" r="5.5" stroke="#dfdbd2" strokeWidth="2" />
          <circle cx="8" cy="8" r="7" stroke="#dfdbd2" strokeWidth="2" strokeDasharray="2 3.5" />
          <path d="M5.5 0h5v7h-5z" fill="#4a4943" /><path d="M8 0v8" stroke="#dfdbd2" strokeWidth="2" />
        </Icon>
      </div>
    </header>
  );
}

export default function App() {
  return (
    <div className="flex h-screen flex-col overflow-hidden bg-[#efebe6] text-black font-['DejaVu_Sans',sans-serif]">
      <TopPanel />
      <div className="flex min-h-0 flex-1">
        <Launcher />
        <div className="flex min-w-0 flex-1 flex-col">
          <nav className="flex h-5 shrink-0 items-center gap-[15px] border-b border-[#d2cfcb] pl-[9px]">
            {menus.map((menu) => (
              <button key={menu} className="text-xs leading-none">
                <span className="underline underline-offset-2">{menu[0]}</span>
                {menu.slice(1)}
              </button>
            ))}
          </nav>
          <MainToolbar />
          <div className="flex h-[30px] shrink-0 items-center border-b border-[#b4b0ac] bg-linear-to-b from-[#f8f5f2] to-[#ebe8e3] pl-[5px]">
            <div className="w-2"><Grip /></div>
            <ToolButton label="Grid">
              <path d="M1 1h14v14H1zM5.5 1v14M10.5 1v14M1 5.5h14M1 10.5h14" stroke={DARK} strokeWidth="1.6" />
              <DropMark />
            </ToolButton>
          </div>
          <main className="flex min-h-0 flex-1">
            <Palette />
            <Sheets />
            <div className="flex w-[6px] shrink-0 items-center justify-center">
              <svg width="3" height="18">
                <path d="M1.5 0v18" stroke="#b5b1ac" strokeDasharray="1 3" />
              </svg>
            </div>
            <div className="flex min-w-0 flex-1 flex-col">
              <CommandRow />
              <div className="flex min-h-0 flex-1">
                <div className="flex min-w-0 flex-1 flex-col">
                  <div className="relative flex-1 overflow-hidden bg-white">
                    <Schematic />
                  </div>
                  <div className="flex h-[14px] shrink-0 border-t border-[#b4b0ac] bg-linear-to-b from-[#fcfcfb] to-[#efedea]">
                    <Arrow to="left" />
                    <div className="flex-1 border-x border-[#b4b0ac]" />
                    <Arrow to="right" />
                  </div>
                </div>
                <div className="flex pb-[14px]">
                  <VerticalScroll />
                </div>
              </div>
            </div>
          </main>
          <footer className="flex h-7 shrink-0 items-center justify-end pr-[25px]">
            <Icon w={12} h={16}><path d="M7 0v6h5L6 16v-6H0z" fill="#7cb83a" /></Icon>
          </footer>
        </div>
      </div>
    </div>
  );
}
